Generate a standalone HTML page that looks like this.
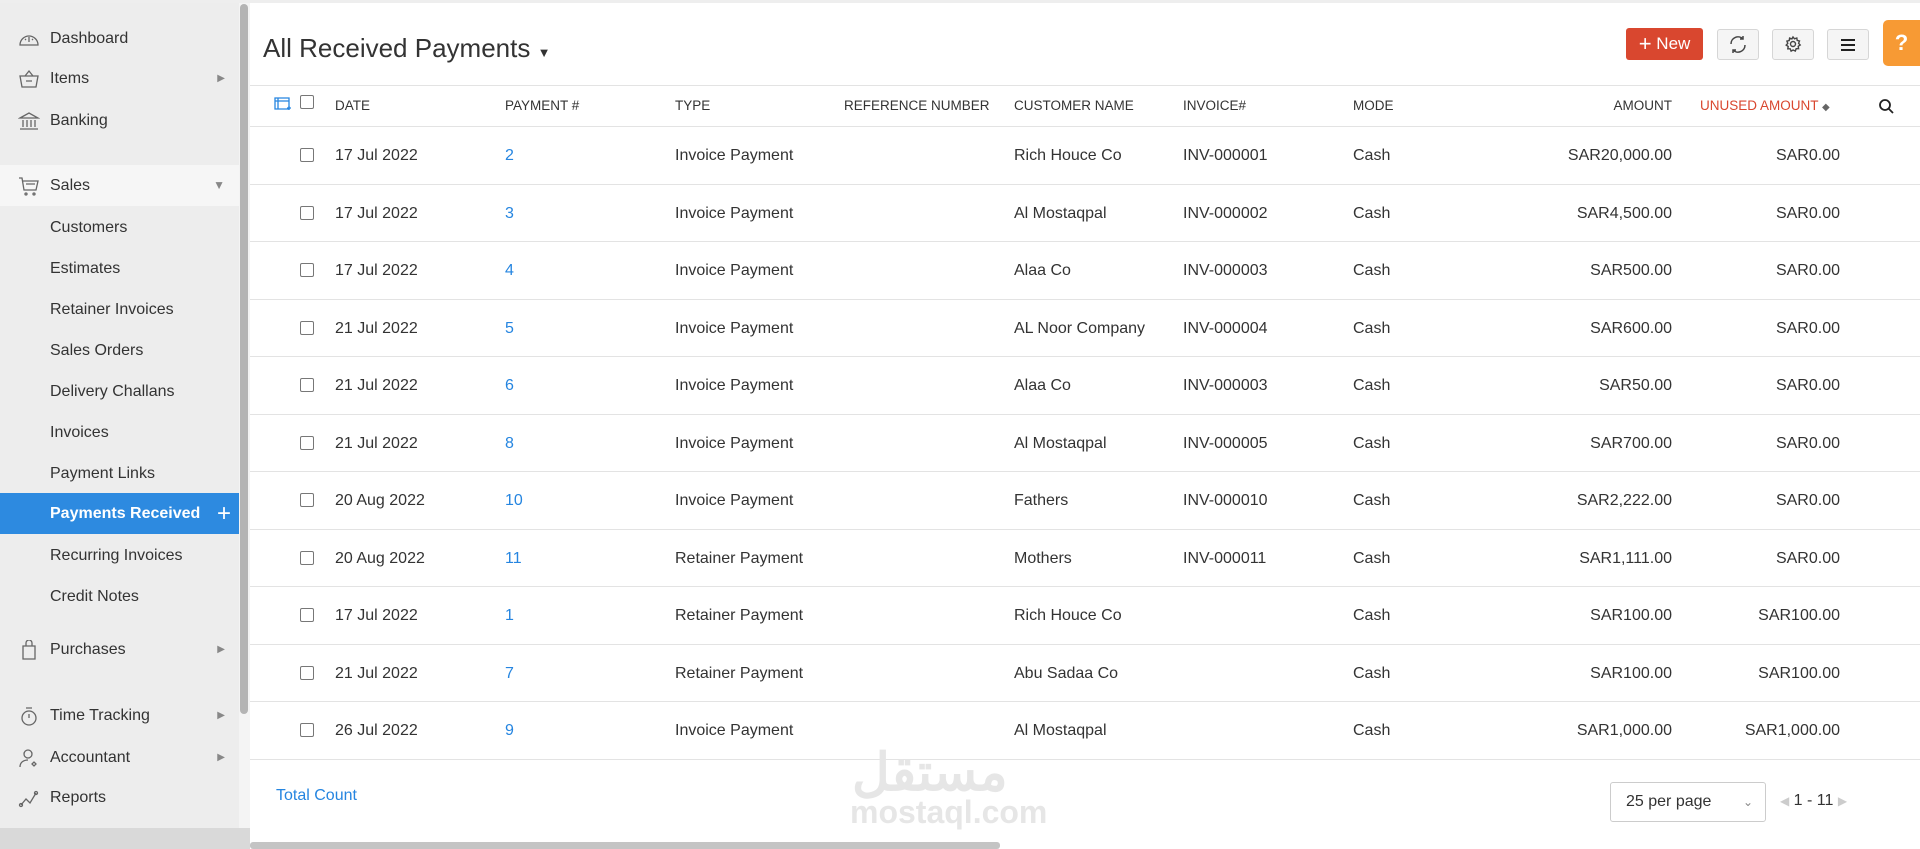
<!DOCTYPE html>
<html><head><meta charset="utf-8"><style>
*{box-sizing:border-box;margin:0;padding:0}
body{width:1920px;height:849px;overflow:hidden;font-family:"Liberation Sans",sans-serif;background:#fff;color:#333;position:relative}
.sb{position:absolute;left:0;top:3px;width:239px;height:846px;background:#ededed}
.sbar{position:absolute;left:239px;top:3px;width:11px;height:846px;background:#f4f4f4}
.thumb{position:absolute;left:240px;top:4px;width:8px;height:710px;background:#b4b4b4;border-radius:4px}
.it{position:absolute;left:0;width:239px;height:41px;line-height:41px;font-size:16px;color:#333;padding-left:50px}
.it svg{position:absolute;left:18px;top:11px}
.arr{position:absolute;right:14px;top:0;font-size:10px;color:#888}
.sub{padding-left:50px}
.act{background:#2d8ae0;color:#fff;font-weight:bold}
.main{position:absolute;left:250px;top:0;right:0;height:849px}
.topline{position:absolute;left:0;top:0;width:1920px;height:3px;background:#eee}
.title{position:absolute;left:263px;top:33px;font-size:26px;color:#333}
.btn{position:absolute;top:29px;height:31px;border:1px solid #d6d6d6;background:#f5f5f5;border-radius:3px}
.hr{position:absolute;left:250px;right:0;height:1px;background:#e3e3e3}
.h{position:absolute;top:98px;font-size:13.5px;color:#333;text-transform:uppercase}
.c{position:absolute;font-size:16px;color:#333}
.n{color:#2585e0}
.cb{position:absolute;left:300px;width:14px;height:14px;border:1px solid #777;border-radius:2px;background:#fff}
.r{text-align:right}
</style></head><body>
<div class="topline"></div>
<div class="sb"></div><div class="sbar"></div><div class="thumb"></div>
<div class="it" style="top:18px"><svg width="22" height="20" viewBox="0 0 22 20" fill="none" stroke="#666" stroke-width="1.3"><path d="M2 16a9 9 0 1 1 18 0z"/><path d="M11 8v5M7 10l1 1M15 10l-1 1"/></svg>Dashboard</div>
<div class="it" style="top:58px"><svg width="22" height="20" viewBox="0 0 22 20" fill="none" stroke="#666" stroke-width="1.3"><path d="M2 7h18l-2 11H4z M7 7l4-5 4 5M8 12h6"/></svg>Items<span class="arr">▶</span></div>
<div class="it" style="top:100px"><svg width="22" height="20" viewBox="0 0 22 20" fill="none" stroke="#666" stroke-width="1.3"><path d="M2 7l9-5 9 5zM5 9v7M9 9v7M13 9v7M17 9v7M2 18h18"/></svg>Banking</div>
<div class="it" style="top:165px;background:#f6f6f6"><svg width="22" height="20" viewBox="0 0 22 20" fill="none" stroke="#666" stroke-width="1.3"><path d="M1 2h3l2 12h12l2-9H5M8 8h9"/><circle cx="8" cy="18" r="1"/><circle cx="16" cy="18" r="1"/></svg>Sales<span class="arr" style="font-size:12px">▼</span></div>
<div class="it" style="top:207px">Customers</div>
<div class="it" style="top:248px">Estimates</div>
<div class="it" style="top:289px">Retainer Invoices</div>
<div class="it" style="top:330px">Sales Orders</div>
<div class="it" style="top:371px">Delivery Challans</div>
<div class="it" style="top:412px">Invoices</div>
<div class="it" style="top:453px">Payment Links</div>
<div class="it act" style="top:493px">Payments Received<span style="position:absolute;right:8px;font-weight:normal;font-size:24px">+</span></div>
<div class="it" style="top:535px">Recurring Invoices</div>
<div class="it" style="top:576px">Credit Notes</div>
<div class="it" style="top:629px"><svg width="22" height="20" viewBox="0 0 22 20" fill="none" stroke="#666" stroke-width="1.3"><path d="M5 6h12v13H5zM8 6V3a3 3 0 0 1 6 0v3"/></svg>Purchases<span class="arr">▶</span></div>
<div class="it" style="top:695px"><svg width="22" height="20" viewBox="0 0 22 20" fill="none" stroke="#666" stroke-width="1.3"><circle cx="11" cy="12" r="7"/><path d="M8 2h6M11 8v4"/></svg>Time Tracking<span class="arr">▶</span></div>
<div class="it" style="top:737px"><svg width="22" height="20" viewBox="0 0 22 20" fill="none" stroke="#666" stroke-width="1.3"><circle cx="10" cy="6" r="4"/><path d="M2 19c0-5 4-7 8-7M14 16l2-2 2 2-2 2z"/></svg>Accountant<span class="arr">▶</span></div>
<div class="it" style="top:777px"><svg width="22" height="20" viewBox="0 0 22 20" fill="none" stroke="#666" stroke-width="1.3"><path d="M3 17l5-6 4 4 6-10"/><circle cx="3" cy="17" r="1.5"/><circle cx="18" cy="5" r="1.5"/></svg>Reports</div>
<div style="position:absolute;left:0;top:828px;width:250px;height:21px;background:#d9d9d9"></div>

<div class="title">All Received Payments <span style="font-size:13px">▼</span></div>
<div style="position:absolute;left:1626px;top:28px;width:77px;height:32px;background:#d9472f;border-radius:3px;color:#fff;font-size:17px;line-height:32px;text-align:center"><span style="font-size:22px;vertical-align:-2px">+</span> New</div>
<div class="btn" style="left:1717px;width:42px"><svg width="40" height="29" viewBox="0 0 40 29" fill="none" stroke="#444" stroke-width="1.5"><path d="M13 14a7 7 0 0 1 12-5M27 15a7 7 0 0 1-12 5M25 6v3h-3M15 23v-3h3"/></svg></div>
<div class="btn" style="left:1772px;width:42px"><svg width="40" height="29" viewBox="0 0 40 29" fill="none" stroke="#444" stroke-width="1.4"><circle cx="20" cy="14" r="2.5"/><path d="M20 7l1.5 1.8 2.3-.8.4 2.4 2.3.6-.9 2.3 1.6 1.7-2 1.3.4 2.4-2.4 0-.9 2.3-2.2-1-2 1.1-.9-2.3-2.4 0 .4-2.4-2-1.3 1.6-1.7-.9-2.3 2.3-.6.4-2.4 2.3.8z"/></svg></div>
<div class="btn" style="left:1827px;width:42px"><svg width="40" height="29" viewBox="0 0 40 29" stroke="#222" stroke-width="2"><path d="M13 10h14M13 15h14M13 20h14"/></svg></div>
<div style="position:absolute;left:1883px;top:20px;width:37px;height:46px;background:#f79a34;border-radius:5px 0 0 5px;color:#fff;font-weight:bold;font-size:22px;line-height:46px;text-align:center">?</div>

<div class="hr" style="top:85px"></div>
<svg style="position:absolute;left:274px;top:96px" width="18" height="16" fill="none" stroke="#2585e0" stroke-width="1.3"><path d="M1 2h14v11H1zM1 5h14M4 2v11"/><path d="M13 12h4M15 10v4"/></svg>
<div class="cb" style="top:95px"></div>
<div class="h" style="left:335px">Date</div>
<div class="h" style="left:505px">Payment #</div>
<div class="h" style="left:675px">Type</div>
<div class="h" style="left:844px">Reference Number</div>
<div class="h" style="left:1014px">Customer Name</div>
<div class="h" style="left:1183px">Invoice#</div>
<div class="h" style="left:1353px">Mode</div>
<div class="h r" style="left:1500px;width:172px">Amount</div>
<div class="h" style="left:1700px;color:#d9472f">Unused Amount <span style="color:#666;font-size:10px">◆</span></div>
<svg style="position:absolute;left:1878px;top:98px" width="16" height="16" fill="none" stroke="#222" stroke-width="1.8"><circle cx="7" cy="7" r="5"/><path d="M11 11l4 4"/></svg>
<div class="hr" style="top:126px"></div>

<div id="rows"></div>
<script>
var d=[["17 Jul 2022","2","Invoice Payment","Rich Houce Co","INV-000001","SAR20,000.00","SAR0.00"],
["17 Jul 2022","3","Invoice Payment","Al Mostaqpal","INV-000002","SAR4,500.00","SAR0.00"],
["17 Jul 2022","4","Invoice Payment","Alaa Co","INV-000003","SAR500.00","SAR0.00"],
["21 Jul 2022","5","Invoice Payment","AL Noor Company","INV-000004","SAR600.00","SAR0.00"],
["21 Jul 2022","6","Invoice Payment","Alaa Co","INV-000003","SAR50.00","SAR0.00"],
["21 Jul 2022","8","Invoice Payment","Al Mostaqpal","INV-000005","SAR700.00","SAR0.00"],
["20 Aug 2022","10","Invoice Payment","Fathers","INV-000010","SAR2,222.00","SAR0.00"],
["20 Aug 2022","11","Retainer Payment","Mothers","INV-000011","SAR1,111.00","SAR0.00"],
["17 Jul 2022","1","Retainer Payment","Rich Houce Co","","SAR100.00","SAR100.00"],
["21 Jul 2022","7","Retainer Payment","Abu Sadaa Co","","SAR100.00","SAR100.00"],
["26 Jul 2022","9","Invoice Payment","Al Mostaqpal","","SAR1,000.00","SAR1,000.00"]];
var h="",y=126;
d.forEach(function(r){var t=y+21;
h+='<div class="cb" style="top:'+(t+1)+'px"></div>'+
'<div class="c" style="left:335px;top:'+t+'px">'+r[0]+'</div>'+
'<div class="c n" style="left:505px;top:'+t+'px">'+r[1]+'</div>'+
'<div class="c" style="left:675px;top:'+t+'px">'+r[2]+'</div>'+
'<div class="c" style="left:1014px;top:'+t+'px">'+r[3]+'</div>'+
'<div class="c" style="left:1183px;top:'+t+'px">'+r[4]+'</div>'+
'<div class="c" style="left:1353px;top:'+t+'px">Cash</div>'+
'<div class="c r" style="left:1472px;width:200px;top:'+t+'px">'+r[5]+'</div>'+
'<div class="c r" style="left:1640px;width:200px;top:'+t+'px">'+r[6]+'</div>';
y+=57.5;h+='<div class="hr" style="top:'+Math.round(y)+'px"></div>';});
document.getElementById('rows').innerHTML=h;
</script>
<div class="c n" style="left:276px;top:787px">Total Count</div>
<div style="position:absolute;left:852px;top:730px;font-size:52px;font-weight:bold;color:#e6e6e6;font-family:'Noto Sans CJK SC',sans-serif">مستقل</div>
<div style="position:absolute;left:850px;top:794px;font-size:32px;font-weight:bold;color:#e6e6e6">mostaql.com</div>
<div style="position:absolute;left:1610px;top:782px;width:156px;height:40px;border:1px solid #ccc;border-radius:3px;font-size:16px;line-height:38px;padding-left:15px;color:#333">25 per page<span style="position:absolute;right:12px;color:#888;font-size:12px">⌄</span></div>
<div class="c" style="left:1780px;top:792px"><span style="color:#ccc;font-size:12px">◀</span> 1 - 11 <span style="color:#ccc;font-size:12px">▶</span></div>
<div style="position:absolute;left:250px;top:842px;width:750px;height:7px;background:#c4c4c4;border-radius:3px"></div>
</body></html>
